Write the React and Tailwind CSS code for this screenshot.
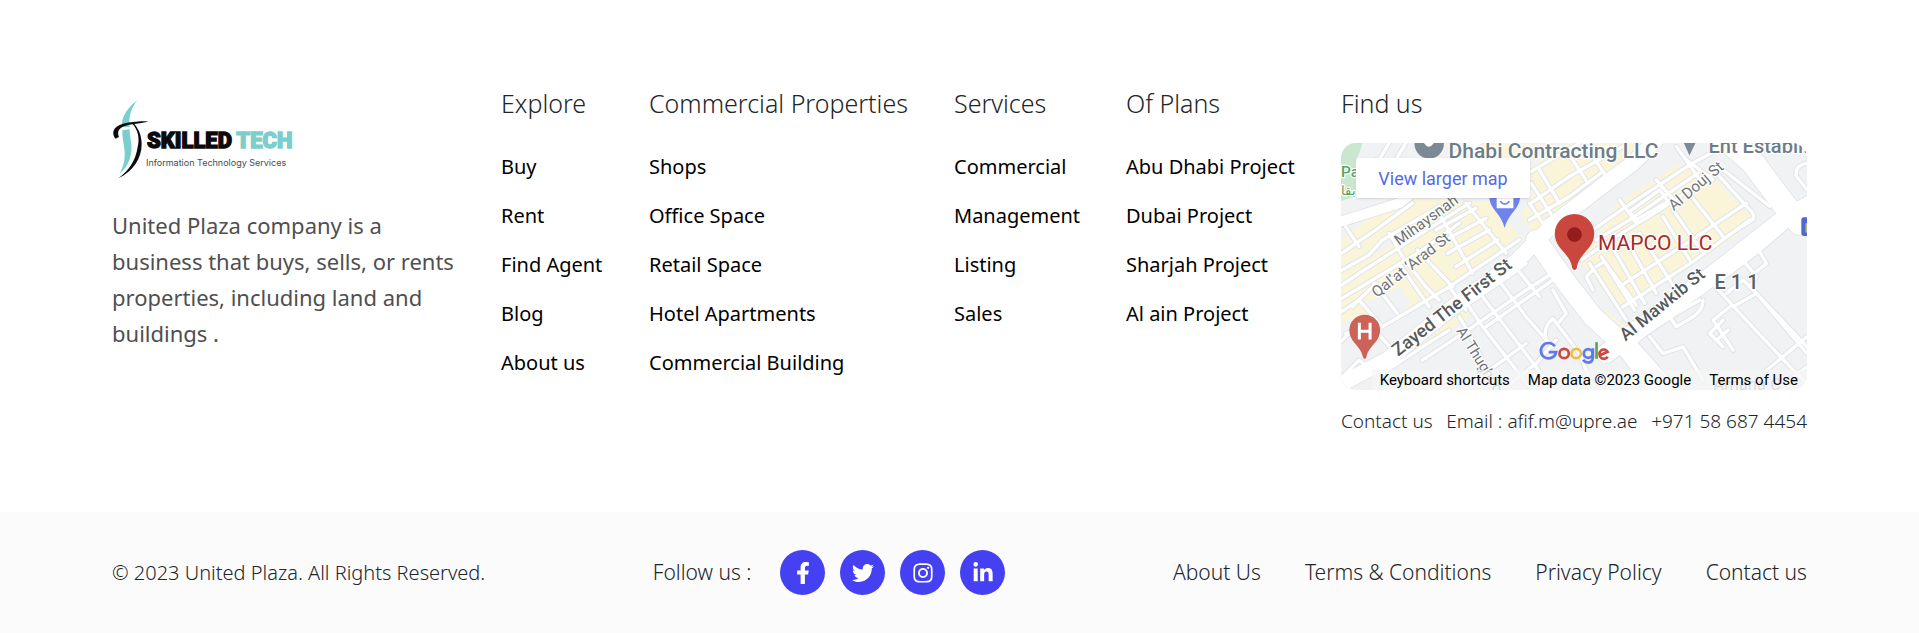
import { FaFacebookF, FaTwitter, FaInstagram, FaLinkedinIn } from "react-icons/fa";

const linkColumns = [
  { title: "Explore", links: ["Buy", "Rent", "Find Agent", "Blog", "About us"] },
  {
    title: "Commercial Properties",
    links: ["Shops", "Office Space", "Retail Space", "Hotel Apartments", "Commercial Building"],
  },
  { title: "Services", links: ["Commercial", "Management", "Listing", "Sales"] },
  {
    title: "Of Plans",
    links: ["Abu Dhabi Project", "Dubai Project", "Sharjah Project", "Al ain Project"],
  },
];

const socials = [
  { name: "Facebook", Icon: FaFacebookF },
  { name: "Twitter", Icon: FaTwitter },
  { name: "Instagram", Icon: FaInstagram },
  { name: "LinkedIn", Icon: FaLinkedinIn },
];

const legal = ["About Us", "Terms & Conditions", "Privacy Policy", "Contact us"];

// Residential plots, filled pale yellow
const plots = [
  "M0 300 L120 215 L175 178 L350 178 L200 262 L150 292 L60 350 L0 385Z",
  "M0 400 L170 310 L340 185 L455 185 L540 290 L420 372 L330 440 L215 515 L150 470 L90 480 L0 560Z",
  "M320 10 L575 10 L575 60 L300 60Z",
  "M575 80 L680 10 L900 10 L860 65 L760 130 L690 190 L620 262 L575 268 L545 225 L575 180Z",
  "M775 290 L830 195 L1010 75 L1090 90 L1150 120 L1235 235 L1195 285 L850 510 L720 365Z",
  "M800 510 L850 555 L820 575 L795 545Z",
  "M215 590 L290 535 L350 505 L400 520 L250 625Z",
  "M1060 460 L1080 448 L1090 462 L1068 478Z",
  "M20 520 L70 500 L90 520 L35 545Z",
];

// Open ground inside the residential area
const voids = [
  "M120 470 L185 440 L215 490 L150 530 L110 515Z",
  "M745 225 L790 190 L815 225 L765 262Z",
  "M1130 125 L1180 100 L1290 200 L1240 240Z",
  "M950 60 L1010 25 L1030 60 L975 95Z",
  "M240 60 L330 20 L350 60Z",
];

const lanes = [
  "M0 345 L110 270 L220 190", "M0 395 L90 345 L130 300 L300 200", "M0 440 L60 400 L200 310 L390 190",
  "M0 480 L100 420 L250 330 L360 250", "M40 500 L110 430", "M150 280 L190 350 L260 440 L300 480",
  "M105 430 L175 520", "M180 370 L270 500", "M300 220 L400 400", "M325 340 L450 270", "M310 305 L440 235",
  "M290 270 L410 205", "M350 380 L475 300", "M380 190 L500 340", "M235 330 L340 440",
  "M0 520 L60 480 L130 560 L330 440 L540 300", "M60 320 L20 260", "M110 60 L70 130", "M150 10 L120 60", "M200 10 L170 60",
  "M575 130 L640 230 L610 250 L570 190", "M575 190 L690 110 L850 20", "M600 90 L660 190",
  "M690 45 L745 130", "M740 20 L800 110", "M575 95 L720 10", "M570 240 L690 170 L790 95",
  "M760 270 L860 200 L1050 75 L1170 10", "M770 300 L870 240 L1075 100", "M725 360 L830 290 L960 210 L1130 95",
  "M840 180 L890 250", "M950 120 L1010 190", "M1010 20 L1080 120", "M890 240 L870 215 L960 150 L985 185Z",
  "M750 370 L860 540", "M785 350 L885 510", "M820 325 L915 490", "M860 300 L950 460", "M900 280 L1000 435",
  "M770 380 L795 365 L890 495", "M840 440 L1040 310 L1220 190", "M850 500 L1060 365 L1230 240", "M970 230 L1050 360",
  "M1000 210 L1090 340", "M1055 170 L1150 290", "M1130 100 L1235 215 Q1250 235 1230 245 L1190 270",
  "M1150 90 L1290 200", "M1040 60 L1120 120", "M760 390 L740 410 L760 450",
  "M210 610 L500 415 L560 370", "M250 660 L400 560 L560 450 L630 405", "M130 700 L250 620 L330 570",
  "M390 500 L430 560 L500 650 L570 740", "M430 470 L620 720", "M485 430 L560 530 L640 620", "M535 390 L600 470",
  "M440 560 L540 490 L640 420", "M450 690 L560 610", "M360 530 L390 580 L470 740", "M330 440 L380 510",
  "M500 740 L590 670 L650 600", "M620 600 Q610 560 640 535 L720 640 L760 740", "M640 450 L680 520 L660 545",
  "M820 560 L880 600 L960 690 L1010 740", "M870 620 L920 580 L1010 520 L1080 480", "M930 590 L970 640 L1030 620 L1090 720",
  "M990 530 L1010 560 L1060 530 Q1090 510 1090 480",
  "M1100 410 L1200 520 L1360 690 L1401 730", "M1130 430 L1260 330 L1330 270", "M1160 460 L1210 420 L1240 450 L1401 620",
  "M1180 500 L1250 460 L1401 640", "M1200 350 L1250 410 L1230 440", "M1250 320 L1280 370 L1230 410",
  "M1170 500 L1120 540 L1180 630 M1150 540 L1110 580 L1150 620 M1165 570 L1130 600", "M1280 690 L1401 590", "M1320 740 L1401 680",
  "M1401 70 Q1360 80 1370 110 L1401 150", "M20 580 L100 560 L160 630", "M0 610 L50 560", "M0 720 L60 660 L100 690",
];

const mainRoads = [
  { d: "M-10 250 L180 190 L330 70 L430 -10", w: 30 },
  { d: "M-10 740 L150 655 L330 510 L530 365 L650 245 L780 145 L880 70 L960 -10", w: 46 },
  { d: "M590 300 L690 440 L760 530 L860 620 L970 760", w: 60 },
  { d: "M800 640 L960 520 L1100 420 L1330 240 L1420 190", w: 56 },
  { d: "M1150 -10 L1240 70 L1330 190 L1380 250", w: 70 },
];

function MapLabel({ x, y, angle = 0, size = 44, fill = "#6f7377", weight = 400, children }) {
  return (
    <text
      transform={`translate(${x} ${y}) rotate(${angle})`}
      fontSize={size}
      fill={fill}
      fontWeight={weight}
      stroke="#ffffff"
      strokeWidth="7"
      strokeLinejoin="round"
      paintOrder="stroke"
    >
      {children}
    </text>
  );
}

function StreetMap() {
  return (
    <svg
      viewBox="6 9 1395 741"
      preserveAspectRatio="xMidYMid slice"
      className="block h-full w-full"
      fontFamily="Roboto, sans-serif"
      role="img"
      aria-label="Street map around MAPCO LLC"
    >
      <rect x="0" y="0" width="1410" height="760" fill="#f0f2f4" />
      <g fill="#faf5d9">
        {plots.map((d) => <path key={d} d={d} />)}
      </g>
      <g fill="#f0f2f4">
        {voids.map((d) => <path key={d} d={d} />)}
      </g>
      <path d="M0 0 H74 L50 70 L50 170 L0 185Z" fill="#cbe6cf" />
      <g fill="none" strokeLinejoin="round" strokeLinecap="round">
        <g stroke="#e0e3e7">
          {lanes.map((d) => <path key={d} d={d} strokeWidth="16" />)}
          {mainRoads.map((r) => <path key={r.d} d={r.d} strokeWidth={r.w + 5} />)}
        </g>
        <g stroke="#ffffff">
          {lanes.map((d) => <path key={d} d={d} strokeWidth="10" />)}
          {mainRoads.map((r) => <path key={r.d} d={r.d} strokeWidth={r.w} />)}
        </g>
      </g>

      <MapLabel x={6} y={112} size={46} fill="#5aa162" weight={500}>Pa</MapLabel>
      <MapLabel x={6} y={166} size={38} fill="#5aa162" weight={500}>بقا</MapLabel>
      <MapLabel x={328} y={55} size={63} fill="#6d7c89" weight={500}>Dhabi Contracting LLC</MapLabel>
      <MapLabel x={1106} y={39} size={60} fill="#6d7c89" weight={500}>Ent Establi..</MapLabel>
      <MapLabel x={180} y={318} angle={-36} size={46}>Mihaysnah</MapLabel>
      <MapLabel x={113} y={474} angle={-38} size={46}>Qal’at ‘Arad St</MapLabel>
      <MapLabel x={177} y={650} angle={-38} size={54} fill="#55595d" weight={500}>Zayed The First St</MapLabel>
      <MapLabel x={350} y={572} angle={58} size={44}>Al Thughoor</MapLabel>
      <MapLabel x={1002} y={214} angle={-40} size={46}>Al Douj St</MapLabel>
      <MapLabel x={858} y={604} angle={-39} size={53} fill="#55595d" weight={500}>Al Mawkib St</MapLabel>
      <MapLabel x={1124} y={447} size={60} fill="#5c6064" weight={500}>E 1 1</MapLabel>
      <MapLabel x={775} y={331} size={63} fill="#a52a2a">MAPCO LLC</MapLabel>
      <MapLabel x={1120} y={750} size={50} fill="#8b9097">Amana C</MapLabel>

      <circle cx="270" cy="12" r="44" fill="#7c8a98" />
      <path d="M254 0 h30 v10 q-15 22 -30 0Z" fill="#fff" />
      <path d="M1028 0 H1072 L1049 47Z" fill="#7c8a98" />

      <path d="M450 170 a46 46 0 0 1 92 0 c0 38 -34 48 -46 94 c-12 -46 -46 -56 -46 -94Z" fill="#6e83ee" />
      <path d="M472 160 H522 V205 H472Z" fill="#fff" />
      <path d="M483 184 q13 18 27 0" fill="none" stroke="#6e83ee" strokeWidth="5" />

      <path d="M705 222 a59 59 0 0 1 59 59 c0 48 -47 58 -52 103 q-7 12 -14 0 c-5 -45 -52 -55 -52 -103 a59 59 0 0 1 59 -59Z" fill="#c9473c" />
      <circle cx="705" cy="284" r="22" fill="#951b1d" />

      <path d="M77 524 a46 46 0 0 1 46 46 c0 37 -36 46 -41 82 q-5 8 -10 0 c-5 -36 -41 -45 -41 -82 a46 46 0 0 1 46 -46Z" fill="#cc6258" />
      <path d="M61 548 V598 M93 548 V598 M61 573 H93" stroke="#fff" strokeWidth="9" />

      <rect x="1384" y="232" width="40" height="56" rx="8" fill="#5169cf" />
      <rect x="1396" y="250" width="12" height="28" fill="#b5b56d" />

      <g fill="none" strokeWidth="8">
        <path d="M646 618 A23 23 0 1 0 650 636 H628" stroke="#6079ec" />
        <circle cx="674" cy="640" r="14" stroke="#cb4a40" />
        <circle cx="710" cy="640" r="14" stroke="#eac043" />
        <circle cx="746" cy="640" r="13" stroke="#6079ec" />
        <path d="M760 624 V652 Q758 668 745 667 Q735 666 731 658" stroke="#6079ec" />
        <path d="M771 606 V656" stroke="#5ba55b" />
        <path d="M781 645 L804 635 A13 14 0 1 0 804 649" stroke="#cb4a40" />
      </g>
    </svg>
  );
}

function Logo() {
  return (
    <svg viewBox="15 12 546 243" className="h-[81px] w-[182px]" role="img" aria-label="Skilled Tech">
      <path d="M91 16 C62 38 42 66 45 96 L68 96 C64 66 72 40 91 16Z" fill="#7bcfca" />
      <path d="M46 106 C44 148 68 180 38 236 C66 212 78 178 72 140 C70 124 68 116 68 103Z" fill="#7bcfca" />
      <path d="M25 131 C6 104 32 84 78 81 C96 79 108 78 124 80 C106 84 92 85 76 88 C44 92 26 104 36 126Z" fill="#0b0b0b" />
      <path d="M76 86 C94 106 98 130 92 156 C86 196 66 226 34 250 C78 230 104 190 104 148 C104 118 92 98 80 85Z" fill="#0b0b0b" />
      <g fontFamily="Roboto, sans-serif" fontWeight="900" fontSize="66" strokeWidth="4">
        <text x="120" y="159" fill="#0b0b0b" stroke="#0b0b0b">SKILLED</text>
        <text x="388" y="159" fill="#7bcfca" stroke="#7bcfca">TECH</text>
      </g>
      <text x="117" y="213" fontFamily="Inter, sans-serif" fontWeight="400" fontSize="27" fill="#4a4a4a">
        Information Technology Services
      </text>
    </svg>
  );
}

export default function App() {
  return (
    <footer className="bg-white font-['Noto_Sans',sans-serif] font-light text-[#212529]">
      <div className="grid grid-cols-[345px_104px_261px_128px_171px_1fr] gap-[44px] px-[112px] pt-[86px] pb-[76px]">
        <div className="pt-[13px]">
          <a href="#home" className="block">
            <Logo />
          </a>
          <p className="mt-[27px] text-[22px] leading-[36px] font-normal text-[#4f4f4f]">
            United Plaza company is a business that buys, sells, or rents properties, including land and buildings .
          </p>
        </div>

        {linkColumns.map((col) => (
          <nav key={col.title} aria-label={col.title} className="whitespace-nowrap">
            <h2 className="text-[25px] leading-[34px]">{col.title}</h2>
            <ul className="mt-[22px] flex flex-col text-[20px] font-normal text-black">
              {col.links.map((label) => (
                <li key={label} className="h-[49px] leading-[49px]">
                  <a href="#listing">{label}</a>
                </li>
              ))}
            </ul>
          </nav>
        ))}

        <section aria-labelledby="find-us" className="min-w-0">
          <h2 id="find-us" className="text-[25px] leading-[34px]">Find us</h2>
          <div className="relative mt-[23px] h-[247px] overflow-hidden rounded-[15px] font-['Roboto',sans-serif] font-normal">
            <StreetMap />
            <a
              href="#map"
              className="absolute top-[15px] left-[15px] flex h-[40px] w-[174px] items-center justify-center rounded-[2px] bg-white text-[18px] text-[#566ae2] shadow"
            >
              View larger map
            </a>
            <div className="absolute right-0 bottom-0 flex h-[20px] items-center gap-[18px] bg-[#f5f5f5]/75 pr-[9px] pl-[8px] text-[15px] whitespace-nowrap text-black">
              <button type="button">Keyboard shortcuts</button>
              <span>Map data ©2023 Google</span>
              <a href="#terms">Terms of Use</a>
            </div>
          </div>
          <address className="mt-[16px] flex justify-between text-[19px] leading-[30px] whitespace-nowrap not-italic">
            <span>Contact us</span>
            <a href="mailto:afif.m@upre.ae">Email : afif.m@upre.ae</a>
            <a href="tel:+971586874454">+971 58 687 4454</a>
          </address>
        </section>
      </div>

      <div className="flex h-[121px] items-center justify-between bg-[#fbfbfb] px-[112px] text-[21px] whitespace-nowrap">
        <p className="text-[20px]">© 2023 United Plaza. All Rights Reserved.</p>
        <div className="flex items-center">
          <span className="mr-[29px]">Follow us :</span>
          <ul className="flex gap-[15px]">
            {socials.map(({ name, Icon }) => (
              <li key={name}>
                <a
                  href="#social"
                  aria-label={name}
                  className="flex size-[45px] items-center justify-center rounded-full bg-[#4640f3] text-white"
                >
                  <Icon size={22} />
                </a>
              </li>
            ))}
          </ul>
        </div>
        <nav aria-label="Legal" className="flex gap-[44px]">
          {legal.map((label) => (
            <a key={label} href="#legal">{label}</a>
          ))}
        </nav>
      </div>
    </footer>
  );
}
